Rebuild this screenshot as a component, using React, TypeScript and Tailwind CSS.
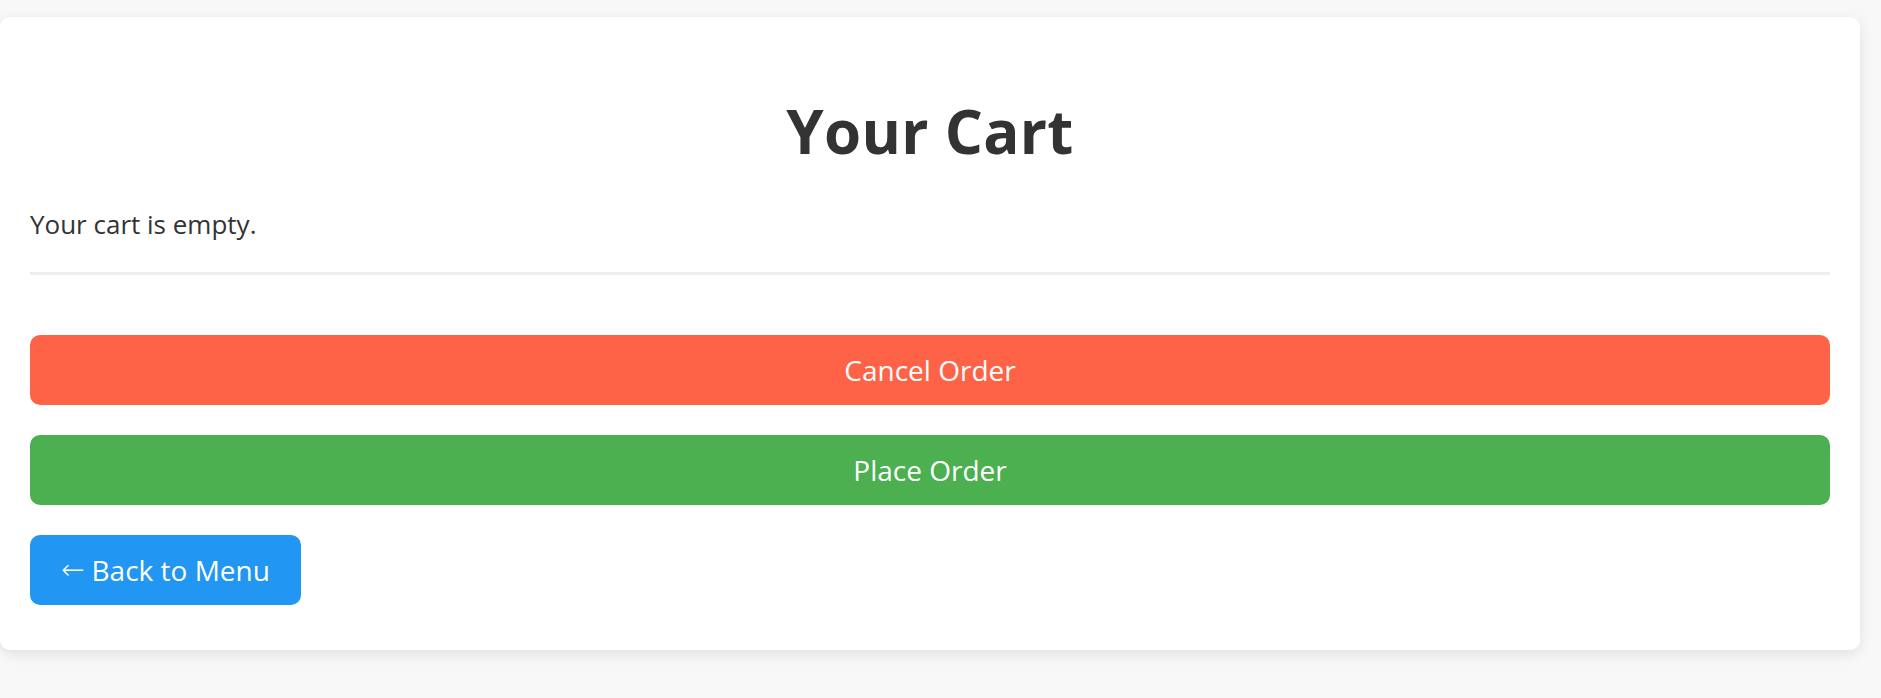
import React from "react"

const CartButton = ({
  children,
  className,
}: {
  children: React.ReactNode
  className: string
}) => (
  <button
    type="button"
    className={`flex h-[70px] items-center justify-center rounded-[10px] text-[28px] leading-none text-white ${className}`}
  >
    {children}
  </button>
)

export default function App() {
  return (
    <div className="min-h-[698px] bg-[#f8f8f8] pt-[17px] font-['Open_Sans',sans-serif]">
      <div className="w-[1860px] rounded-[10px] bg-white px-[30px] pt-[84px] pb-[45px] shadow-[0_4px_14px_rgba(0,0,0,0.1)]">
        <h1 className="text-center text-[60px] font-bold leading-none tracking-[0.3px] text-[#333]">
          Your Cart
        </h1>
        <p className="mt-[50px] text-[26px] leading-none text-[#333]">
          Your cart is empty.
        </p>
        <hr className="mt-[35px] h-[3px] border-0 bg-[#eeeeee]" />
        <div className="mt-[60px] flex flex-col gap-[30px]">
          <CartButton className="w-full bg-[#ff6347]">Cancel Order</CartButton>
          <CartButton className="w-full bg-[#4caf50]">Place Order</CartButton>
          <CartButton className="w-[271px] gap-[7px] bg-[#2196f3]">
            <span className="font-['DejaVu_Sans',sans-serif] font-extralight">←</span>
            <span>Back to Menu</span>
          </CartButton>
        </div>
      </div>
    </div>
  )
}
